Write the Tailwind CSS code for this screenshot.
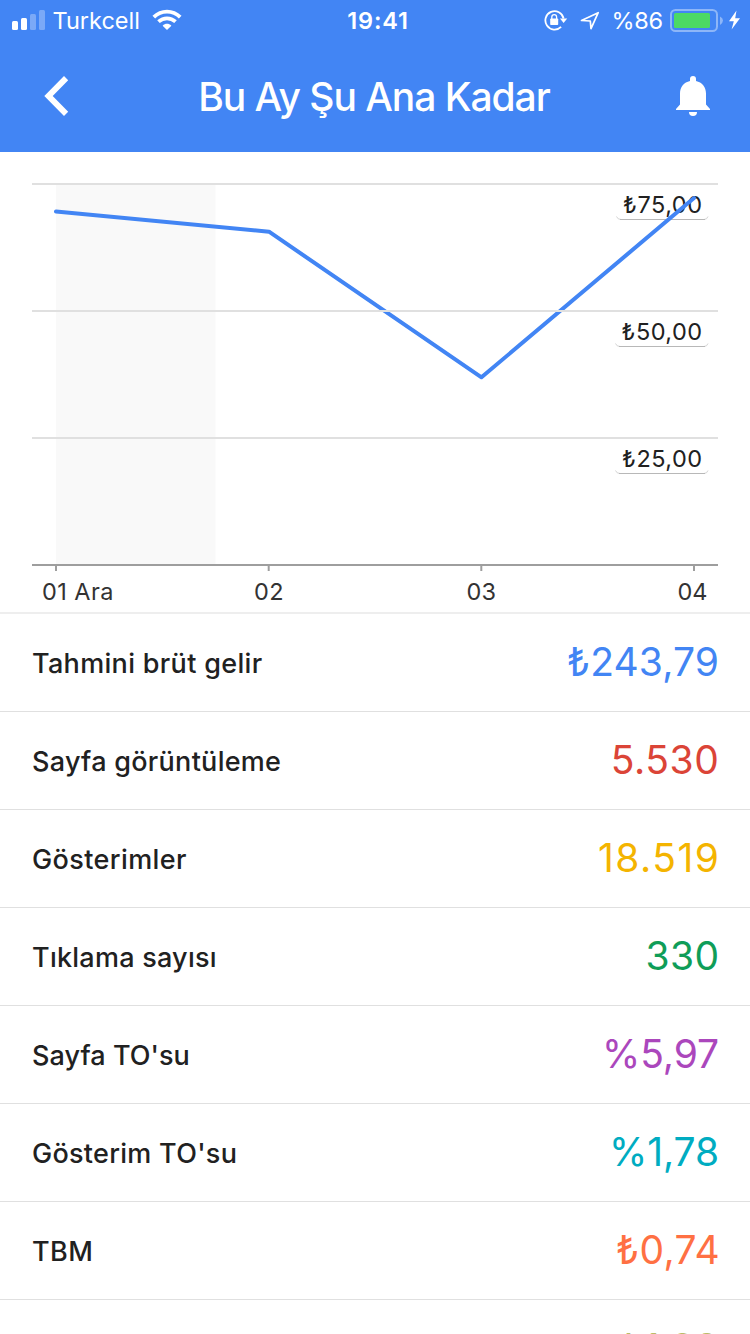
<!DOCTYPE html>
<html lang="tr">
<head>
<meta charset="utf-8">
<title>Bu Ay Şu Ana Kadar</title>
<script src="https://cdn.jsdelivr.net/npm/@tailwindcss/browser@4"></script>
</head>
<body class="bg-white">
<div class="flex h-[1334px] w-[750px] flex-col overflow-hidden bg-white font-['Inter','Liberation_Sans',sans-serif] text-[#212121]">
  <header class="h-[152px] shrink-0 bg-[#4285f4] text-white">
    <div class="grid h-10 grid-cols-3 items-center text-[23.5px] leading-[38px]">
      <div class="flex items-center pl-3">
        <svg class="h-10 w-[34px]" viewBox="0 0 34 40" fill="#fff"><rect y="21" width="6" height="9" rx="1.5"/><rect x="9" y="18" width="6" height="12" rx="1.5"/><rect x="18" y="14" width="6" height="16" rx="1.5" opacity=".3"/><rect x="27" y="10" width="6" height="20" rx="1.5" opacity=".3"/></svg>
        <span class="ml-[6.5px] w-[88.5px] whitespace-nowrap pt-[2px]">Turkcell</span>
        <svg class="ml-[11px] h-10 w-[30px]" viewBox="0 0 30 40" fill="none" stroke="#fff" stroke-width="3.8"><path d="M1.8 17.2C9.3 9.8 20.700 9.800 28.200 17.200"/><path d="M6.500 21.700C11.500 17.200 18.500 17.200 23.500 21.700"/><path d="M10.600 25.700C13.300 23.200 16.700 23.200 19.400 25.700L15 29.900Z" fill="#fff" stroke="none"/></svg>
      </div>
      <div class="pl-[6px] pt-[2px] text-center font-semibold tracking-[0.8px]">19:41</div>
      <div class="flex items-center justify-end pr-[8px]">
        <svg class="h-10 w-[24px]" viewBox="0 0 24 40"><path d="M17.100 26.900A9.200 9.200 0 1 1 19.600 18.500" fill="none" stroke="#fff" stroke-width="1.8"/><path d="M16 18.500H23.200L19.600 23Z" fill="#fff"/><rect x="6.200" y="18.500" width="8" height="6.500" rx=".8" fill="#fff"/><path d="M7.800 19V17a2.400 2.400 0 0 1 4.800 0v2" fill="none" stroke="#fff" stroke-width="1.300"/></svg>
        <svg class="ml-[12px] h-10 w-[20px]" viewBox="0 0 20 40" fill="none" stroke="#fff" stroke-width="1.700" stroke-linejoin="round"><path d="M1.500 20.500L18.200 12.700L11 28.600L10.300 21Z"/></svg>
        <span class="ml-[12px] w-[52px] whitespace-nowrap pt-[2px] tracking-[-0.3px]">%86</span>
        <svg class="ml-[6.5px] h-10 w-[72px]" viewBox="0 0 72 40"><rect x="1" y="10" width="46" height="21" rx="4.500" fill="none" stroke="#fff" stroke-opacity=".4" stroke-width="2"/><rect x="4" y="13" width="36" height="15" rx="1.500" fill="#4cd964"/><path d="M50 16.500Q53 18 53 20.500T50 25Z" fill="#fff" opacity=".4"/><path d="M66.500 10.500L59 21.300H63.800L61.600 29.500L70 18.200H65.200Z" fill="#fff"/></svg>
      </div>
    </div>
    <div class="flex h-28 items-center justify-between pl-[44px] pr-[39px]">
      <svg class="h-10 w-[26px]" viewBox="0 0 26 40" fill="#fff"><path d="M.3 20L20 0L24.200 4.200L8.700 20L24.200 35.800L20 40Z"/></svg>
      <h1 class="whitespace-nowrap pl-[3px] text-[39px] font-medium leading-none tracking-[-1.05px]">Bu Ay Şu Ana Kadar</h1>
      <svg class="h-10 w-[36px]" viewBox="0 0 36 40" fill="#fff"><path d="M15 5V3a3 3 0 0 1 6 0v2C27 6.300 31 11 31 17.500V28.500L35 33V34H1V33L5 28.500V17.500C5 11 9 6.300 15 5Z"/><path d="M14 36H22a4 4 0 0 1-8 0Z"/></svg>
    </div>
  </header>

  <section class="h-[462px] shrink-0 border-b-2 border-[#eeeeee]">
    <svg class="block h-[460px] w-[750px]" viewBox="0 152 750 460">
      <rect x="56" y="185" width="159.500" height="379" fill="#f9f9f9"/>
      <g fill="none" stroke="#d4d4d4">
        <path d="M616.500 216.500q1 3 4.500 3h83q3 0 4-3"/>
        <path d="M615.500 343.500q1 3 4.500 3h84q3 0 4-3"/>
        <path d="M615.500 470.500q1 3 4.500 3h84q3 0 4-3"/>
      </g>
      <g fill="#b8b8b8">
        <rect x="620" y="219" width="85" height="1"/><rect x="619" y="346" width="86" height="1"/><rect x="619" y="473" width="86" height="1"/>
      </g>
      <g fill="#212121" font-size="23.500">
        <text x="623" y="213" textLength="79">₺75,00</text>
        <text x="621.500" y="340" textLength="80.500">₺50,00</text>
        <text x="622" y="467" textLength="80">₺25,00</text>
      </g>
      <path d="M56 211.500L269 231.700L481.500 377.300L694 198" fill="none" stroke="#4285f4" stroke-width="4" stroke-linecap="round" stroke-linejoin="round"/>
      <g fill="#e0e0e0"><rect x="32" y="183" width="686" height="2"/><rect x="32" y="310" width="686" height="2"/><rect x="32" y="437" width="686" height="2"/></g>
      <g fill="#9e9e9e"><rect x="32" y="564" width="686" height="2"/><rect x="55" y="566" width="2" height="5"/><rect x="267.700" y="566" width="2" height="5"/><rect x="480.300" y="566" width="2" height="5"/><rect x="693" y="566" width="2" height="5"/></g>
      <g fill="#333" font-size="23.500">
        <text x="42" y="600" textLength="71.500">01 Ara</text>
        <text x="254" y="600" textLength="29.500">02</text>
        <text x="466.500" y="600" textLength="29.500">03</text>
        <text x="677.500" y="600" textLength="30">04</text>
      </g>
    </svg>
  </section>

  <main class="[&>div]:flex [&>div]:h-[98px] [&>div]:items-center [&>div]:justify-between [&>div]:border-b [&>div]:border-[#e0e0e0] [&>div]:pl-8 [&>div]:pr-[31px] [&>div]:text-[27px] [&_span]:pt-[3px] [&_span]:font-medium [&_b]:text-[39px] [&_b]:font-normal">
    <div><span class="tracking-[0.32px]">Tahmini brüt gelir</span><b class="tracking-[0.1px] text-[#4285f4]">₺243,79</b></div>
    <div><span class="tracking-[0.28px]">Sayfa görüntüleme</span><b class="-mr-[0.5px] tracking-[0.6px] text-[#db4437]">5.530</b></div>
    <div><span class="tracking-[0.4px]">Gösterimler</span><b class="-mr-[1.5px] tracking-[1.500px] text-[#f4b400]">18.519</b></div>
    <div><span class="tracking-[0.25px]">Tıklama sayısı</span><b class="-mr-[0.5px] tracking-[0.4px] text-[#0f9d58]">330</b></div>
    <div><span class="tracking-[0.05px]">Sayfa TO'su</span><b class="tracking-[-0.1px] text-[#ab47bc]">%5,97</b></div>
    <div><span class="tracking-[0.28px]">Gösterim TO'su</span><b class="tracking-[-0.1px] text-[#00acc1]">%1,78</b></div>
    <div><span class="tracking-[0.4px]">TBM</span><b class="-mr-[1px] tracking-[0.300px] text-[#ff7043]">₺0,74</b></div>
    <div><b class="ml-auto text-[#9e9d24]/70">₺1,98</b></div>
  </main>
</div>
</body>
</html>
